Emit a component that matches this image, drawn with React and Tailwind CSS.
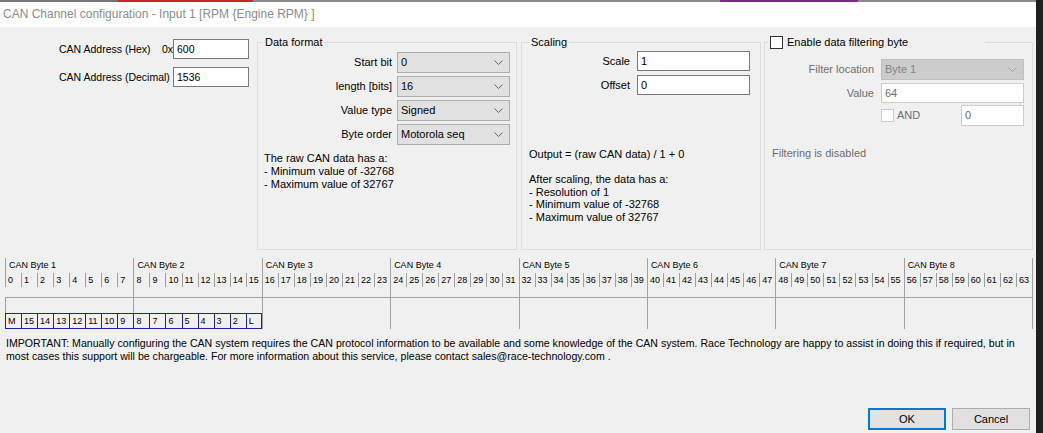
import React from 'react';

const Chevron = ({ color = '#606060' }) => (
  <svg width="9" height="5" viewBox="0 0 9 5" className="shrink-0">
    <path d="M0.5 0.5 L4.5 4.5 L8.5 0.5" fill="none" stroke={color} strokeWidth="1" />
  </svg>
);

const Combo = ({ value, width = 'w-[113px]', disabled = false }) => (
  <div
    className={`flex h-[21px] ${width} items-center justify-between border pl-[3px] pr-[6px] ${
      disabled ? 'border-[#bfbfbf] bg-[#cccccc] text-[#838383]' : 'border-[#adadad] bg-[#e1e1e1]'
    }`}
  >
    <span>{value}</span>
    <Chevron color={disabled ? '#a0a0a0' : '#606060'} />
  </div>
);

const TextBox = ({ value, width = 'w-[113px]', height = 'h-[20px]', disabled = false }) => (
  <div
    className={`flex ${height} ${width} items-center border bg-white px-[3px] ${
      disabled ? 'border-[#cccccc] text-[#6d6d6d]' : 'border-[#7a7a7a]'
    }`}
  >
    {value}
  </div>
);

const dataRows = [
  ['Start bit', '0'],
  ['length [bits]', '16'],
  ['Value type', 'Signed'],
  ['Byte order', 'Motorola seq'],
];

const blueBits = ['M', '15', '14', '13', '12', '11', '10', '9', '8', '7', '6', '5', '4', '3', '2', 'L'];
const bytes = [1, 2, 3, 4, 5, 6, 7, 8];
const bits = Array.from({ length: 64 }, (_, i) => i);

const BitGrid = () => (
  <div className="ml-[5px] mt-[8px] w-[1028px] border-r border-[#a0a0a0] text-[9px] leading-none">
    {/* byte captions */}
    <div className="grid grid-cols-[repeat(64,minmax(0,1fr))]">
      {bytes.map((b) => (
        <div key={b} className="col-span-8 flex h-[15px] items-center border-l border-[#a0a0a0] pl-[3px]">
          CAN Byte {b}
        </div>
      ))}
    </div>
    {/* bit numbers */}
    <div className="grid grid-cols-[repeat(64,minmax(0,1fr))]">
      {bits.map((i) => (
        <div key={i} className="flex h-[14px] items-center border-l border-[#a0a0a0] pl-[2px]">
          {i}
        </div>
      ))}
    </div>
    {/* spacer down to the line */}
    <div className="grid h-[10px] grid-cols-[repeat(64,minmax(0,1fr))]">
      {bytes.map((b) => (
        <div key={b} className={`col-span-8 ${b === 1 ? '' : 'border-l border-[#a0a0a0]'}`} />
      ))}
    </div>
    <div className="grid h-[16px] grid-cols-[repeat(64,minmax(0,1fr))] border-t border-[#a0a0a0]">
      {bytes.map((b) => (
        <div key={b} className="col-span-8 border-l border-[#a0a0a0]" />
      ))}
    </div>
    <div className="grid h-[16px] grid-cols-[repeat(64,minmax(0,1fr))]">
      {blueBits.map((t, i) => (
        <div
          key={i}
          className={`flex items-center border-y border-l border-[#1f1fa8] pl-[2px] ${i === 15 ? 'border-r' : ''}`}
        >
          {t}
        </div>
      ))}
      {bytes.slice(2).map((b) => (
        <div key={b} className="col-span-8 border-l border-[#a0a0a0]" />
      ))}
    </div>
  </div>
);

export default function App() {
  return (
    <div className="flex h-[433px] w-[1043px] overflow-hidden bg-[#1f1f1f] font-['Liberation_Sans',Arial,sans-serif] text-[11px] leading-[13px] text-black">
      <div className="flex w-[1036px] flex-col bg-[#f0f0f0]">
        {/* desktop bleed above the window */}
        <div className="flex h-[2px] shrink-0">
          <div className="w-[118px] bg-[#777777]" />
          <div className="w-[135px] bg-[#c8262a]" />
          <div className="w-[467px] bg-[#8a8a8a]" />
          <div className="w-[138px] bg-[#7b2b8c]" />
          <div className="flex-1 bg-[#8a8a8a]" />
        </div>

        {/* title bar */}
        <div className="flex h-[25px] shrink-0 items-center bg-white pl-[3px] text-[12px] text-[#8c8c8c]">
          CAN Channel configuration - Input 1 [RPM {'{'}Engine RPM{'}'} ]
        </div>

        {/* client area */}
        <div className="flex flex-1 flex-col">
          <div className="flex pt-[9px]">
            {/* address */}
            <div className="flex w-[257px] flex-col gap-[8px] whitespace-nowrap pl-[59px] pt-[3px] text-[10.5px]">
              <div className="flex items-center">
                <span className="w-[103px]">CAN Address (Hex)</span>
                <span className="w-[11px]">0x</span>
                <TextBox value="600" width="w-[76px]" />
              </div>
              <div className="flex items-center">
                <span className="w-[114px]">CAN Address (Decimal)</span>
                <TextBox value="1536" width="w-[76px]" />
              </div>
            </div>

            {/* data format */}
            <fieldset className="h-[214px] w-[260px] border border-[#dcdcdc]">
              <legend className="ml-[5px] h-[13px] px-[2px]">Data format</legend>
              <div className="mt-[3px] flex flex-col gap-[3px]">
                {dataRows.map(([label, value]) => (
                  <div key={label} className="flex items-center">
                    <span className="w-[134px] whitespace-nowrap text-right">{label}</span>
                    <span className="w-[5px]" />
                    <Combo value={value} />
                  </div>
                ))}
              </div>
              <div className="mt-[7px] pl-[6px]">
                The raw CAN data has a:
                <br />- Minimum value of -32768
                <br />- Maximum value of 32767
              </div>
            </fieldset>

            {/* scaling */}
            <fieldset className="ml-[4px] h-[214px] w-[240px] border border-[#dcdcdc]">
              <legend className="ml-[7px] h-[13px] px-[2px]">Scaling</legend>
              <div className="mt-[2px] flex flex-col gap-[4px]">
                <div className="flex items-center">
                  <span className="w-[108px] text-right">Scale</span>
                  <span className="w-[7px]" />
                  <TextBox value="1" />
                </div>
                <div className="flex items-center">
                  <span className="w-[108px] text-right">Offset</span>
                  <span className="w-[7px]" />
                  <TextBox value="0" />
                </div>
              </div>
              <div className="mt-[53px] pl-[7px] leading-[12.5px]">
                Output = (raw CAN data) / 1 + 0
                <br />
                <br />
                After scaling, the data has a:
                <br />- Resolution of 1
                <br />- Minimum value of -32768
                <br />- Maximum value of 32767
              </div>
            </fieldset>

            {/* filtering */}
            <fieldset className="ml-[3px] h-[214px] w-[269px] border border-[#dcdcdc]">
              <legend className="ml-[3px] flex h-[13px] w-[217px] items-center gap-[4px] pl-[2px]">
                <span className="h-[13px] w-[13px] border border-[#333333] bg-white" />
                <span>Enable data filtering byte</span>
              </legend>
              <div className="mt-[10px] flex flex-col text-[#6d6d6d]">
                <div className="flex items-center">
                  <span className="w-[109px] whitespace-nowrap text-right">Filter location</span>
                  <span className="w-[7px]" />
                  <Combo value="Byte 1" width="w-[143px]" disabled />
                </div>
                <div className="mt-[3px] flex items-center">
                  <span className="w-[109px] text-right">Value</span>
                  <span className="w-[7px]" />
                  <TextBox value="64" width="w-[143px]" disabled />
                </div>
                <div className="mt-[2px] flex items-center">
                  <span className="w-[116px]" />
                  <span className="h-[13px] w-[13px] border border-[#cccccc] bg-white" />
                  <span className="ml-[3px] w-[64px]">AND</span>
                  <TextBox value="0" width="w-[63px]" height="h-[21px]" disabled />
                </div>
              </div>
              <div className="mt-[21px] pl-[7px] text-[#6d6d6d]">Filtering is disabled</div>
            </fieldset>
          </div>

          <BitGrid />

          <div className="mt-[8px] whitespace-nowrap pl-[6px] text-[10.6px]">
            IMPORTANT: Manually configuring the CAN system requires the CAN protocol information to be available and
            some knowledge of the CAN system. Race Technology are happy to assist in doing this if required, but in
            <br />
            most cases this support will be chargeable. For more information about this service, please contact
            sales@race-technology.com .
          </div>

          <div className="mt-auto flex justify-end gap-[6px] pb-[3px] pr-[6px]">
            <button className="h-[22px] w-[78px] border-2 border-[#0078d7] bg-[#e1e1e1]">OK</button>
            <button className="h-[22px] w-[78px] border border-[#adadad] bg-[#e1e1e1]">Cancel</button>
          </div>
        </div>
      </div>
      <div className="flex-1" />
    </div>
  );
}
